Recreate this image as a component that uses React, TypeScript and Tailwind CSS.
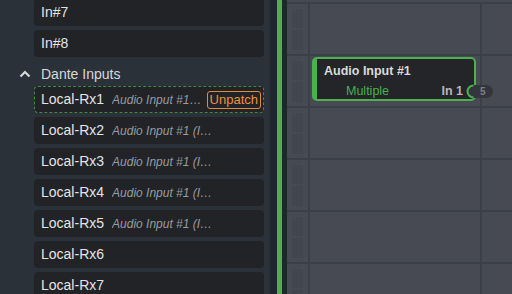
import { ReactNode } from 'react';

const font = { fontFamily: '"Liberation Sans", Arial, sans-serif' };

type Row = { name: string; patch?: string; active?: boolean };

const topRows: Row[] = [{ name: 'In#7' }, { name: 'In#8' }];

const danteRows: Row[] = [
  { name: 'Local-Rx1', patch: 'Audio Input #1 (In 1)', active: true },
  { name: 'Local-Rx2', patch: 'Audio Input #1 (In 2)' },
  { name: 'Local-Rx3', patch: 'Audio Input #1 (In 3)' },
  { name: 'Local-Rx4', patch: 'Audio Input #1 (In 4)' },
  { name: 'Local-Rx5', patch: 'Audio Input #1 (In 5)' },
  { name: 'Local-Rx6' },
  { name: 'Local-Rx7' },
];

const ChannelRow = ({ row }: { row: Row }) => (
  <div
    className={
      row.active
        ? 'h-[27px] shrink-0 rounded-[4px] bg-[#212327] border border-dashed border-[#3f8a45] flex items-center pl-[6px] pr-[2px]'
        : 'h-[27px] shrink-0 rounded-[4px] bg-[#212327] flex items-center pl-[7px] pr-[3px]'
    }
  >
    <span className="text-[14px] text-[#e4e4e4] shrink-0">{row.name}</span>
    {row.patch && (
      <span className="ml-2 flex-1 min-w-0 truncate text-[12px] italic text-[#989ba1]">{row.patch}</span>
    )}
    {row.active ? (
      <button
        type="button"
        className="ml-[3px] h-[18px] shrink-0 rounded-[3px] border border-[#e08a3c] px-[2px] text-[13px] leading-none text-[#f0913c]"
      >
        Unpatch
      </button>
    ) : (
      row.patch && <span className="w-[44px] shrink-0" />
    )}
  </div>
);

const Ruler = () => (
  <div className="w-[21px] shrink-0 flex flex-col gap-[2px] pt-[5px] pl-[5px]">
    <div className="w-[11px] h-[19px] bg-[#42464e]" />
    <div className="w-[11px] h-[20px] bg-[#42464e]" />
  </div>
);

const GridRow = ({ children }: { children?: ReactNode }) => (
  <div className="h-[52px] shrink-0 border-t-2 border-[#3b4048] flex">
    <Ruler />
    <div className="w-[172px] shrink-0 border-l-2 border-[#3b4048]" />
    <div className="flex-1 border-l-2 border-[#3b4048]" />
    {children}
  </div>
);

export default function App() {
  return (
    <div className="w-[512px] h-[294px] overflow-hidden flex bg-[#2b3139]" style={font}>
      {/* Sidebar */}
      <div className="w-[270px] shrink-0 flex flex-col gap-[4px] -mt-px pl-[34px] pr-[6px]">
        {topRows.map((r) => (
          <ChannelRow key={r.name} row={r} />
        ))}
        <div className="h-[21px] shrink-0 flex items-center pt-[5px] -ml-[15px] gap-[10px]">
          <svg width="12" height="8" viewBox="0 0 12 8" className="shrink-0">
            <polyline points="1.5,6.5 6,2 10.5,6.5" fill="none" stroke="#d6d6d6" strokeWidth="2.2" />
          </svg>
          <span className="text-[14px] text-[#d8d8d8]">Dante Inputs</span>
        </div>
        {danteRows.map((r) => (
          <ChannelRow key={r.name} row={r} />
        ))}
      </div>

      {/* Divider */}
      <div className="w-[7px] shrink-0 bg-[#1f262e]" />
      <div className="w-[5px] shrink-0 bg-[#4caf50]" />
      <div className="w-[5px] shrink-0 bg-[#1f262e]" />

      {/* Canvas */}
      <div className="relative flex-1 bg-[#474a52] pt-[2px] flex flex-col">
        <GridRow />
        <GridRow />
        <GridRow />
        <GridRow />
        <GridRow />
        <GridRow />

        {/* Node */}
        <div className="absolute left-[25px] top-[57px] w-[164px] h-[44px] rounded-[5px] border-2 border-l-[5px] border-[#4caf50] bg-[#232529] flex flex-col">
          <div className="pl-[7px] pt-[5px] text-[12.5px] font-bold text-[#dadada] leading-[14px]">Audio Input #1</div>
          <div className="flex items-center justify-between pl-[29px] pr-[11px] pt-[6px] leading-[14px]">
            <span className="text-[12.5px] text-[#4caf50]">Multiple</span>
            <span className="text-[12.5px] font-bold text-[#b4b6ba]">In 1</span>
          </div>
        </div>
        <svg className="absolute left-[179px] top-[84px]" width="28" height="15" viewBox="0 0 28 15">
          <rect x="1" y="1" width="26" height="13" rx="6.5" fill="#33363b" />
          <path d="M7.5 1.5 A6 6 0 0 0 7.5 13.5" fill="none" stroke="#4caf50" strokeWidth="2" />
          <text x="14" y="11" fontSize="10" fontWeight="bold" fill="#7d8086" fontFamily="Liberation Sans, Arial, sans-serif">5</text>
        </svg>
      </div>
    </div>
  );
}
